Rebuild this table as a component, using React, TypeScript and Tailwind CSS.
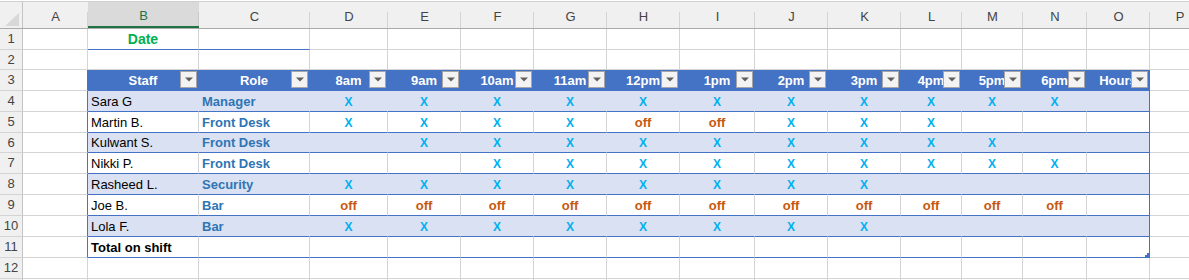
const COLUMNS = [
  { letter: 'A', width: 'w-[65px]' },
  { letter: 'B', width: 'w-[111px]' },
  { letter: 'C', width: 'w-[111px]' },
  { letter: 'D', width: 'w-[78px]' },
  { letter: 'E', width: 'w-[73px]' },
  { letter: 'F', width: 'w-[73px]' },
  { letter: 'G', width: 'w-[73px]' },
  { letter: 'H', width: 'w-[73px]' },
  { letter: 'I', width: 'w-[75px]' },
  { letter: 'J', width: 'w-[73px]' },
  { letter: 'K', width: 'w-[73px]' },
  { letter: 'L', width: 'w-[61px]' },
  { letter: 'M', width: 'w-[61px]' },
  { letter: 'N', width: 'w-[64px]' },
  { letter: 'O', width: 'w-[63px]' },
  { letter: 'P', width: 'w-[60px]' },
]

const HEADERS = ['Staff', 'Role', '8am', '9am', '10am', '11am', '12pm', '1pm', '2pm', '3pm', '4pm', '5pm', '6pm', 'Hours']

// X = on shift, o = off, . = empty
const STAFF = [
  { name: 'Sara G', role: 'Manager', slots: 'XXXXXXXXXXX' },
  { name: 'Martin B.', role: 'Front Desk', slots: 'XXXXooXXX..' },
  { name: 'Kulwant S.', role: 'Front Desk', slots: '.XXXXXXXXX.' },
  { name: 'Nikki P.', role: 'Front Desk', slots: '..XXXXXXXXX' },
  { name: 'Rasheed L.', role: 'Security', slots: 'XXXXXXXX...' },
  { name: 'Joe B.', role: 'Bar', slots: 'ooooooooooo' },
  { name: 'Lola F.', role: 'Bar', slots: 'XXXXXXXX...' },
]

const ROW_HEIGHTS: Record<number, string> = {
  1: 'h-[21px]',
  2: 'h-[20px]',
  3: 'h-[21px]',
  4: 'h-[21px]',
  5: 'h-[21px]',
  6: 'h-[20px]',
  7: 'h-[21px]',
  8: 'h-[21px]',
  9: 'h-[21px]',
  10: 'h-[21px]',
  11: 'h-[21px]',
  12: 'h-[21px]',
  13: 'h-[21px]',
}

function FilterButton() {
  return (
    <div className="absolute right-[1px] top-[1px] flex h-[17px] w-[17px] items-center justify-center border border-[#a6a6a6] bg-[#f3f3f3]">
      <svg width="8" height="5" viewBox="0 0 8 5">
        <path d="M0 0.5 H8 L4 4.5 Z" fill="#5f5f5f" />
      </svg>
    </div>
  )
}

function RowHeader({ n, label = true }: { n: number; label?: boolean }) {
  return (
    <div
      className={`flex w-[23px] shrink-0 items-center justify-center border-r border-b border-r-[#c4c4c4] border-b-[#d4d4d4] bg-[#f0f0f0] text-[13px] text-[#444] ${ROW_HEIGHTS[n]}`}
    >
      {label ? n : null}
    </div>
  )
}

function GridCell({ col, className = '', children }: { col: number; className?: string; children?: React.ReactNode }) {
  return (
    <div className={`relative flex shrink-0 items-center border-r border-b ${COLUMNS[col].width} ${className}`}>
      {children}
    </div>
  )
}

function Slot({ value }: { value: string }) {
  if (value === 'X') {
    return <span className="w-full text-center text-[12px] font-bold text-[#00b0f0]">X</span>
  }
  if (value === 'o') {
    return <span className="w-full text-center text-[13px] font-bold text-[#c65911]">off</span>
  }
  return null
}

function PlainRow({ n, label = true }: { n: number; label?: boolean }) {
  return (
    <div className={`flex ${ROW_HEIGHTS[n]}`}>
      <RowHeader n={n} label={label} />
      {COLUMNS.map((_, i) => (
        <GridCell key={i} col={i} className="border-[#d4d4d4] bg-white" />
      ))}
    </div>
  )
}

export default function App() {
  return (
    <div className="h-[280px] w-[1189px] overflow-hidden bg-white font-['Liberation_Sans',Arial,sans-serif] text-black">
      <div className="h-px bg-white" />

      {/* column letters */}
      <div className="flex h-[28px] border-t border-b border-t-[#d0d0d0] border-b-[#ababab] bg-[#f0f0f0]">
        <div className="flex w-[23px] shrink-0 items-end justify-end border-r border-[#c4c4c4] pr-[3px] pb-[2px]">
          <svg width="14" height="13" viewBox="0 0 14 13">
            <path d="M14 0 V13 H0 Z" fill="#d8d8d8" />
          </svg>
        </div>
        {COLUMNS.map((c) => (
          <div
            key={c.letter}
            className={
              c.letter === 'B'
                ? `relative flex shrink-0 items-center justify-center border-b-2 border-[#217346] bg-[#dadada] pt-[4px] text-[13px] text-[#217346] after:absolute after:top-[10px] after:right-0 after:bottom-0 after:w-px after:bg-[#c8c8c8] ${c.width}`
                : `relative flex shrink-0 items-center justify-center pt-[3px] text-[13px] text-[#444] after:absolute after:top-[10px] after:right-0 after:bottom-0 after:w-px after:bg-[#d4d4d4] ${c.width}`
            }
          >
            {c.letter}
          </div>
        ))}
      </div>

      {/* row 1 */}
      <div className={`flex ${ROW_HEIGHTS[1]}`}>
        <RowHeader n={1} />
        {COLUMNS.map((_, i) =>
          i === 1 ? (
            <GridCell key={i} col={i} className="justify-center border-r-[#d4d4d4] border-b-[#4472c4] bg-white text-[14px] font-bold text-[#00b050]">
              Date
            </GridCell>
          ) : i === 2 ? (
            <GridCell key={i} col={i} className="border-r-[#d4d4d4] border-b-[#4472c4] bg-white" />
          ) : (
            <GridCell key={i} col={i} className="border-[#d4d4d4] bg-white" />
          ),
        )}
      </div>

      <PlainRow n={2} />

      {/* row 3: table header */}
      <div className={`flex ${ROW_HEIGHTS[3]}`}>
        <RowHeader n={3} />
        <GridCell col={0} className="border-r-[#4472c4] border-b-[#d4d4d4] bg-white" />
        {HEADERS.map((h, i) => (
          <GridCell key={h} col={i + 1} className="justify-center overflow-hidden border-[#4472c4] bg-[#4472c4] pt-[1px] text-[13px] font-bold whitespace-nowrap text-white">
            {h}
            <FilterButton />
          </GridCell>
        ))}
        <GridCell col={15} className="border-[#d4d4d4] bg-white" />
      </div>

      {/* rows 4-10: staff */}
      {STAFF.map((s, r) => {
        const n = r + 4
        const banded = r % 2 === 0
        const fill = banded ? 'bg-[#d9e1f2] border-r-[#d9e1f2]' : 'bg-white border-r-[#d4d4d4]'
        return (
          <div key={s.name} className={`flex ${ROW_HEIGHTS[n]}`}>
            <RowHeader n={n} />
            <GridCell col={0} className="border-r-[#4472c4] border-b-[#d4d4d4] bg-white" />
            <GridCell col={1} className={`border-b-[#4472c4] pt-[1px] pl-[3px] text-[13px] ${fill}`}>
              {s.name}
            </GridCell>
            <GridCell col={2} className={`border-b-[#4472c4] pt-[1px] pl-[3px] text-[13px] font-bold text-[#2f75b5] ${fill}`}>
              {s.role}
            </GridCell>
            {s.slots.split('').map((v, i) => (
              <GridCell key={i} col={i + 3} className={`border-b-[#4472c4] pt-[1px] ${fill}`}>
                <Slot value={v} />
              </GridCell>
            ))}
            <GridCell col={14} className={`border-r-[#4472c4] border-b-[#4472c4] ${banded ? 'bg-[#d9e1f2]' : 'bg-white'}`} />
            <GridCell col={15} className="border-[#d4d4d4] bg-white" />
          </div>
        )
      })}

      {/* row 11: totals */}
      <div className={`flex ${ROW_HEIGHTS[11]}`}>
        <RowHeader n={11} />
        <GridCell col={0} className="border-r-[#4472c4] border-b-[#d4d4d4] bg-white" />
        <GridCell col={1} className="border-r-[#d4d4d4] border-b-[#4472c4] bg-white pt-[1px] pl-[3px] text-[13px] font-bold whitespace-nowrap">
          Total on shift
        </GridCell>
        {COLUMNS.slice(2, 14).map((_, i) => (
          <GridCell key={i} col={i + 2} className="border-r-[#d4d4d4] border-b-[#4472c4] bg-white" />
        ))}
        <GridCell col={14} className="border-r-[#4472c4] border-b-[#4472c4] bg-white">
          <div className="absolute right-0 bottom-0 h-[2px] w-[4px] bg-[#4472c4]" />
          <div className="absolute right-0 bottom-[2px] h-[2px] w-[2px] bg-[#4472c4]" />
        </GridCell>
        <GridCell col={15} className="border-[#d4d4d4] bg-white" />
      </div>

      <PlainRow n={12} />
      <PlainRow n={13} label={false} />
    </div>
  )
}
